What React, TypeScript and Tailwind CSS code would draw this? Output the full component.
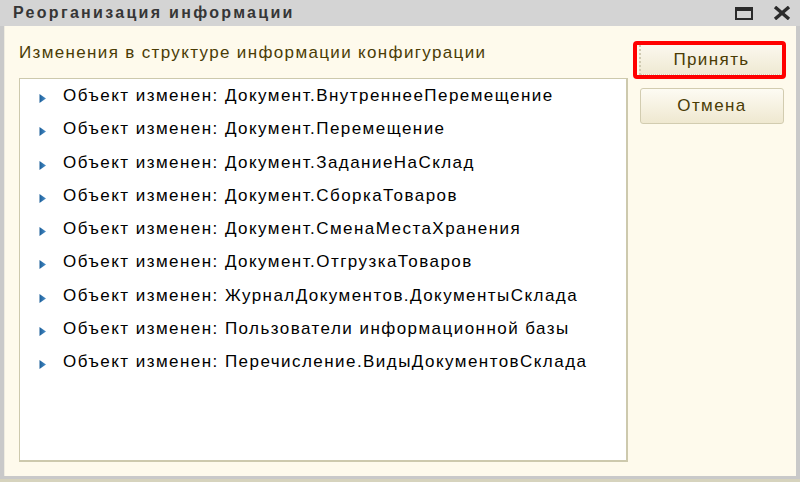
import React from 'react';

const items = [
  'Объект изменен: Документ.ВнутреннееПеремещение',
  'Объект изменен: Документ.Перемещение',
  'Объект изменен: Документ.ЗаданиеНаСклад',
  'Объект изменен: Документ.СборкаТоваров',
  'Объект изменен: Документ.СменаМестаХранения',
  'Объект изменен: Документ.ОтгрузкаТоваров',
  'Объект изменен: ЖурналДокументов.ДокументыСклада',
  'Объект изменен: Пользователи информационной базы',
  'Объект изменен: Перечисление.ВидыДокументовСклада',
];

const Arrow = () => (
  <svg width="9" height="11" viewBox="0 0 9 11" className="shrink-0 mt-[6px]">
    <defs>
      <linearGradient id="ar" x1="0" y1="0" x2="1" y2="0">
        <stop offset="0" stopColor="#1d5f99" />
        <stop offset="1" stopColor="#4a8fc9" />
      </linearGradient>
    </defs>
    <path d="M1.5 1 L8 5.5 L1.5 10 Z" fill="url(#ar)" />
  </svg>
);

export default function App() {
  return (
    <div className="w-[800px] h-[482px] bg-[#d6d3bd] overflow-hidden" style={{ fontFamily: '"Liberation Sans", Arial, sans-serif' }}>
      <div className="w-[800px] h-[479px] flex flex-col border-l-[4px] border-r-[4px] border-b-[3px] border-[#c9c9c9] bg-[#fefaec]">
        {/* title bar */}
        <div className="h-[26px] bg-[#d4d4d4] flex items-center -mx-[4px] pl-[13px] pr-[9px]">
          <span className="text-[16px] font-bold text-[#363636] tracking-[2.3px]">Реорганизация информации</span>
          <div className="ml-auto flex items-center gap-[20px]">
            <svg width="18" height="13" viewBox="0 0 18 13">
              <rect x="1" y="1" width="16" height="11" fill="none" stroke="#2b2b2b" strokeWidth="2" />
              <rect x="1" y="1" width="16" height="3" fill="#2b2b2b" />
            </svg>
            <svg width="18" height="14" viewBox="0 0 18 14">
              <path d="M2 1 L16 13 M16 1 L2 13" stroke="#2b2b2b" strokeWidth="3.4" />
            </svg>
          </div>
        </div>
        {/* body */}
        <div className="flex-1 flex border-l border-[#efece0] pl-[14px] pr-[6px] pb-[14px]">
          <div className="flex flex-col w-[609px]">
            <div className="h-[52px] flex items-center text-[17px] text-[#4a3c05] pt-[1px] tracking-[1.35px]">
              Изменения в структуре информации конфигурации
            </div>
            <div className="flex-1 bg-white border border-[#cdc9ad] border-b-2 border-r-2 pt-[7px] pl-[18px]">
              {items.map((t) => (
                <div key={t} className="h-[33.3px] flex items-start gap-[16px] pt-[1px]">
                  <Arrow />
                  <span className="text-[17px] text-black leading-[18px] tracking-[1.45px]">{t}</span>
                </div>
              ))}
            </div>
          </div>
          <div className="ml-[5px] pt-[15px] flex flex-col">
            <div className="w-[153px] h-[38px] border-[4px] border-[#ff0000] rounded-[4px] pl-[2px] flex">
              <button className="flex-1 bg-gradient-to-b from-[#fbf8ee] to-[#efe9d3] border-l-2 border-dotted border-[#cfcab2] border-b border-[#b5ae90] text-[17px] text-[#4a3c05] tracking-[1.4px]">
                Принять
              </button>
            </div>
            <button className="mt-[9px] ml-[7px] w-[144px] h-[36px] rounded-[3px] border border-[#d2ccb0] bg-gradient-to-b from-[#fdfbf3] to-[#efe8d0] text-[17px] text-[#4a3c05] tracking-[1.4px]">
              Отмена
            </button>
          </div>
        </div>
      </div>
    </div>
  );
}
